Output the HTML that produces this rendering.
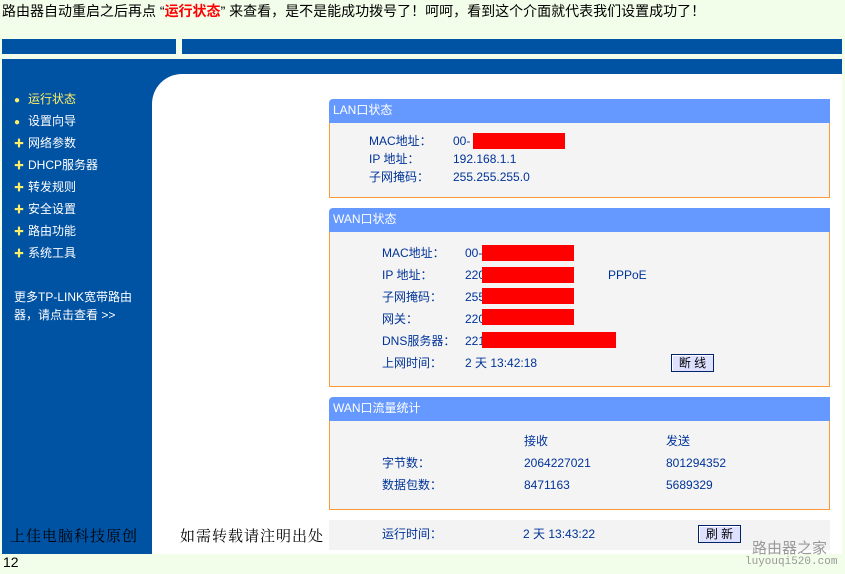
<!DOCTYPE html>
<html><head><meta charset="utf-8"><style>
*{margin:0;padding:0;box-sizing:border-box}
body{width:845px;height:574px;background:#f2fdea;position:relative;overflow:hidden;font-family:"Liberation Sans","WenQuanYi Zen Hei","Noto Sans CJK SC",sans-serif;}
.a{position:absolute;white-space:nowrap}
.blue{background:#0052a3}
.t{font-size:12px;color:#003399}
.t div{height:18px;line-height:18px}
.t.w div{height:22px;line-height:22px}
.hd{background:#6699ff;color:#fff;font-size:12px;padding:3px 0 0 4px;line-height:16px;border-radius:4px 0 0 0}
.bd{background:#f4f4f4;border:1px solid #ff9933;border-top:none}
.red{background:#ff0000}
.menu{font-size:12px;color:#fff}
.menu div{height:22px;line-height:22px}
.menu span{color:#ffee66;display:inline-block;width:14px;font-size:10px}
.btn{border:1px solid #002266;background:#dde0ff;font-size:12px;line-height:16px;color:#000;text-align:center;box-shadow:inset 1px 1px 0 #fff}
</style></head><body>
<div class="a" style="left:2px;top:1px;font-size:14px;line-height:20px;color:#000">路由器自动重启之后再点 “<b style="color:#ff0000">运行状态</b>” 来查看，是不是能成功拨号了！呵呵，看到这个介面就代表我们设置成功了！</div>
<div class="a blue" style="left:2px;top:39px;width:174px;height:15px"></div>
<div class="a blue" style="left:182px;top:39px;width:660px;height:15px"></div>
<div class="a blue" style="left:2px;top:59px;width:840px;height:495px"></div>
<div class="a" style="left:152px;top:74px;width:690px;height:480px;background:#fff;border-radius:30px 0 0 0"></div>
<div class="a menu" style="left:14px;top:88px">
<div><span>●</span><b style="font-weight:normal;color:#ffee66">运行状态</b></div>
<div><span>●</span>设置向导</div>
<div><span>✚</span>网络参数</div>
<div><span>✚</span>DHCP服务器</div>
<div><span>✚</span>转发规则</div>
<div><span>✚</span>安全设置</div>
<div><span>✚</span>路由功能</div>
<div><span>✚</span>系统工具</div>
</div>
<div class="a" style="left:14px;top:288px;font-size:12px;color:#fff;line-height:18px">更多TP-LINK宽带路由<br>器，请点击查看 &gt;&gt;</div>

<div class="a hd" style="left:329px;top:99px;width:501px;height:24px">LAN口状态</div>
<div class="a bd" style="left:329px;top:123px;width:501px;height:75px"></div>
<div class="a t" style="left:369px;top:132px"><div>MAC地址：</div><div>IP 地址：</div><div>子网掩码：</div></div>
<div class="a t" style="left:453px;top:132px"><div>00-</div><div>192.168.1.1</div><div>255.255.255.0</div></div>
<div class="a red" style="left:473px;top:133px;width:92px;height:16px"></div>

<div class="a hd" style="left:329px;top:208px;width:501px;height:24px">WAN口状态</div>
<div class="a bd" style="left:329px;top:232px;width:501px;height:155px"></div>
<div class="a t w" style="left:382px;top:242px"><div>MAC地址：</div><div>IP 地址：</div><div>子网掩码：</div><div>网关：</div><div>DNS服务器：</div><div>上网时间：</div></div>
<div class="a t w" style="left:465px;top:242px"><div>00-</div><div>220</div><div>255</div><div>220</div><div>221</div><div>2 天 13:42:18</div></div>
<div class="a red" style="left:482px;top:245px;width:92px;height:16px"></div>
<div class="a red" style="left:482px;top:267px;width:92px;height:16px"></div>
<div class="a red" style="left:482px;top:288px;width:92px;height:16px"></div>
<div class="a red" style="left:482px;top:309px;width:92px;height:16px"></div>
<div class="a red" style="left:482px;top:332px;width:134px;height:16px"></div>
<div class="a t w" style="left:608px;top:264px"><div>PPPoE</div></div>
<div class="a btn" style="left:671px;top:354px;width:43px;height:18px">断 线</div>

<div class="a hd" style="left:329px;top:397px;width:501px;height:24px">WAN口流量统计</div>
<div class="a bd" style="left:329px;top:421px;width:501px;height:89px"></div>
<div class="a t w" style="left:524px;top:430px"><div>接收</div><div>2064227021</div><div>8471163</div></div>
<div class="a t w" style="left:666px;top:430px"><div>发送</div><div>801294352</div><div>5689329</div></div>
<div class="a t w" style="left:382px;top:452px"><div>字节数：</div><div>数据包数：</div></div>

<div class="a" style="left:329px;top:520px;width:501px;height:30px;background:#f3f3f3"></div>
<div class="a t w" style="left:382px;top:523px"><div>运行时间：</div></div>
<div class="a t w" style="left:523px;top:523px"><div>2 天 13:43:22</div></div>
<div class="a btn" style="left:698px;top:525px;width:43px;height:18px">刷 新</div>

<div class="a" style="left:10px;top:525px;font-size:15px;color:#000;font-family:'Liberation Serif','Noto Serif CJK SC',serif;letter-spacing:1px">上佳电脑科技原创</div>
<div class="a" style="left:180px;top:525px;font-size:15px;color:#000;font-family:'Liberation Serif','Noto Serif CJK SC',serif;letter-spacing:1px">如需转载请注明出处</div>
<div class="a" style="left:752px;top:537px;font-size:15px;color:#999">路由器之家</div>
<div class="a" style="left:745px;top:556px;font-size:11px;color:#999;font-family:'Liberation Mono',monospace">luyouqi520.com</div>
<div class="a" style="left:3px;top:554px;font-size:14px;color:#000">12</div>
</body></html>
